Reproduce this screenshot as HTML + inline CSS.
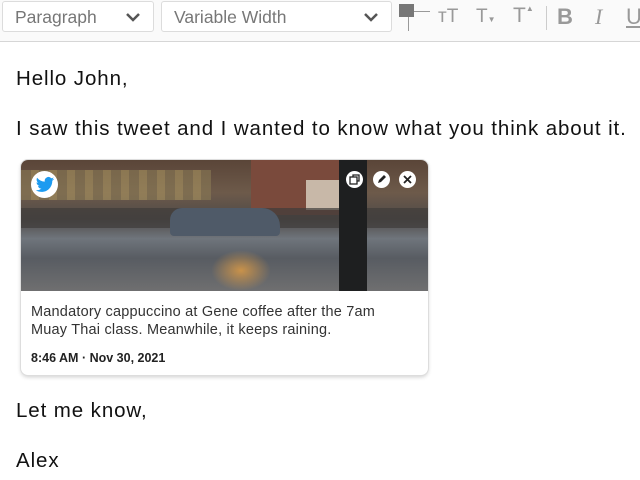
<!DOCTYPE html>
<html><head><style>
body{margin:0;width:640px;height:480px;overflow:hidden;background:#fff;font-family:"Liberation Sans",sans-serif;position:relative}
.tb{position:absolute;left:0;top:0;width:640px;height:41px;background:#fafafa;border-bottom:1px solid #d6d6d6}
.sel{position:absolute;top:1px;height:31px;border:1px solid #dcdcdc;border-radius:3px;background:#fff;color:#777;font-size:17.5px;line-height:31px;padding-left:12px;box-sizing:border-box}
.sel svg{position:absolute;right:12px;top:10px}
.t{position:absolute;left:16px;font-size:20.5px;letter-spacing:0.9px;color:#111}
.card{position:absolute;left:21px;top:160px;width:407px;height:215px;border-radius:7px;box-shadow:0 0 0 1px #ddd,0 2px 4px rgba(0,0,0,.2);overflow:hidden;background:#fff}
.img{position:absolute;left:0;top:0;width:407px;height:131px;background:linear-gradient(180deg,#5a4538 0%,#6d5a4a 25%,#4f4a48 45%,#6f757c 60%,#585c62 75%,#6f6f70 100%)}
.ic{position:absolute;width:17px;height:17px;border-radius:50%;background:#fff;top:11px}
</style></head><body>
<div class="tb">
<div class="sel" style="left:2px;width:152px">Paragraph<svg width="16" height="10"><path d="M2 2l6 6 6-6" stroke="#555" stroke-width="2.5" fill="none"/></svg></div>
<div class="sel" style="left:161px;width:231px">Variable Width<svg width="16" height="10"><path d="M2 2l6 6 6-6" stroke="#555" stroke-width="2.5" fill="none"/></svg></div>
<div style="position:absolute;left:399px;top:4px;width:15px;height:13px;background:#777"></div>
<div style="position:absolute;left:414px;top:11px;width:16px;height:1px;background:#999"></div>
<div style="position:absolute;left:408px;top:17px;width:1px;height:14px;background:#999"></div>
<div style="position:absolute;left:438px;top:6px;font-size:19px;color:#999">ᴛT</div>
<div style="position:absolute;left:476px;top:6px;font-size:19px;color:#999">T<span style="font-size:8px">▼</span></div>
<div style="position:absolute;left:513px;top:4px;font-size:21px;color:#999">T<span style="font-size:8px;vertical-align:top">▲</span></div>
<div style="position:absolute;left:546px;top:6px;width:1px;height:24px;background:#ccc"></div>
<div style="position:absolute;left:557px;top:4px;font-size:22px;font-weight:bold;color:#999">B</div>
<div style="position:absolute;left:595px;top:4px;font-size:22px;font-style:italic;color:#999;font-family:'Liberation Serif',serif">I</div>
<div style="position:absolute;left:626px;top:4px;font-size:22px;color:#999;text-decoration:underline">U</div>
</div>
<div class="t" style="top:67px">Hello John,</div>
<div class="t" style="top:117px">I saw this tweet and I wanted to know what you think about it.</div>
<div class="card">
<div class="img">
<div style="position:absolute;left:0;top:10px;width:190px;height:30px;background:repeating-linear-gradient(90deg,#8a7a55 0 10px,#a99460 10px 18px);opacity:.6"></div>
<div style="position:absolute;left:230px;top:0;width:95px;height:55px;background:#7a4a3c"></div>
<div style="position:absolute;left:285px;top:20px;width:35px;height:30px;background:#c8b8a8"></div>
<div style="position:absolute;left:0;top:48px;width:407px;height:20px;background:#3e3c3a;opacity:.7"></div>
<div style="position:absolute;left:149px;top:48px;width:110px;height:28px;border-radius:12px 18px 4px 4px;background:#4f5a68"></div>
<div style="position:absolute;left:190px;top:90px;width:60px;height:41px;background:radial-gradient(ellipse,#c9924a,transparent 70%)"></div>
<div style="position:absolute;left:318px;top:0;width:28px;height:131px;background:#1e1f20"></div>
</div>
<div style="position:absolute;left:10px;top:11px;width:27px;height:27px;border-radius:50%;background:#fff;text-align:center">
<svg width="20" height="20" viewBox="0 0 24 24" style="margin-top:4px"><path fill="#1d9bf0" d="M23 4.6a9 9 0 0 1-2.6.7 4.5 4.5 0 0 0 2-2.5 9 9 0 0 1-2.9 1.1A4.5 4.5 0 0 0 11.8 8 12.8 12.8 0 0 1 2.5 3.3a4.5 4.5 0 0 0 1.4 6 4.5 4.5 0 0 1-2-.6 4.5 4.5 0 0 0 3.6 4.5 4.5 4.5 0 0 1-2 .1 4.5 4.5 0 0 0 4.2 3.1A9 9 0 0 1 1 18.3 12.8 12.8 0 0 0 7.9 20.3c8.3 0 12.8-6.9 12.8-12.8v-.6A9 9 0 0 0 23 4.6z"/></svg></div>
<div class="ic" style="left:325px"><svg width="17" height="17"><rect x="4" y="6" width="7" height="7" fill="none" stroke="#222" stroke-width="1.3"/><path d="M7 6V4h6v6h-2" fill="none" stroke="#222" stroke-width="1.3"/></svg></div>
<div class="ic" style="left:352px"><svg width="17" height="17"><path d="M5 12l1-3 5-5 2 2-5 5z" fill="#222"/></svg></div>
<div class="ic" style="left:378px"><svg width="17" height="17"><path d="M5 5l7 7M12 5l-7 7" stroke="#222" stroke-width="1.8"/></svg></div>
<div style="position:absolute;left:10px;top:143px;font-size:14.5px;letter-spacing:0.2px;line-height:18px;color:#333">Mandatory cappuccino at Gene coffee after the 7am<br>Muay Thai class. Meanwhile, it keeps raining.</div>
<div style="position:absolute;left:10px;top:191px;font-size:12.5px;font-weight:bold;color:#222">8:46 AM · Nov 30, 2021</div>
</div>
<div class="t" style="top:399px">Let me know,</div>
<div class="t" style="top:449px">Alex</div>
</body></html>
